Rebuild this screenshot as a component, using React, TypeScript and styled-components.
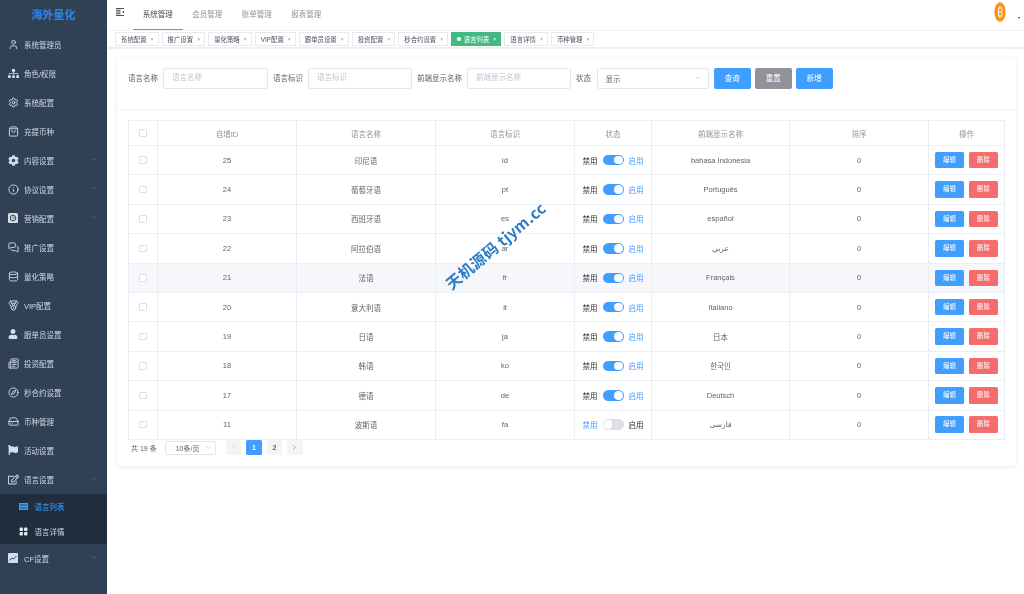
import React from "react";
import styled, { createGlobalStyle } from "styled-components";
import {
  User, Settings, ShoppingBag, Info, MessagesSquare, Database, Medal,
  Newspaper, Compass, ChevronDown, ChevronUp, ChevronLeft, ChevronRight, HardDrive,
} from "lucide-react";
import { FaSitemap, FaCog, FaUser, FaFlag, FaRegEdit } from "react-icons/fa";
import { BsGridFill } from "react-icons/bs";

const GlobalStyle = createGlobalStyle`
  html, body {
    margin: 0;
    padding: 0;
    background: #fff;
    overflow: hidden;
    font-family: "Liberation Sans", "Noto Sans CJK SC", "DejaVu Sans", sans-serif;
  }
  * { box-sizing: border-box; }
`;

// small filled icons the packages don't have
const ClockBox = () => (
  <svg width="10" height="10" viewBox="0 0 10 10">
    <rect width="10" height="10" rx="1.5" fill="#d5dde7" />
    <circle cx="5" cy="5" r="2.8" fill="none" stroke="#304156" strokeWidth="1" />
    <path d="M5 3.5V5h1.5" fill="none" stroke="#304156" strokeWidth=".8" />
  </svg>
);

const ChartBox = () => (
  <svg width="10" height="10" viewBox="0 0 10 10">
    <rect width="10" height="10" rx="1" fill="#d5dde7" />
    <path d="M1.5 7.5 4 5l1.5 1L8.5 3" fill="none" stroke="#304156" strokeWidth="1" />
  </svg>
);

const ListBox = () => (
  <svg width="9" height="7" viewBox="0 0 9 7">
    <rect width="9" height="7" fill="#409eff" />
    <path d="M1 2h7M1 5h7" stroke="#1f2d3d" strokeWidth=".8" />
  </svg>
);

const menu = [
  { label: "系统管理员", icon: <User size={11} /> },
  { label: "角色/权限", icon: <FaSitemap size={11} /> },
  { label: "系统配置", icon: <Settings size={11} /> },
  { label: "充提币种", icon: <ShoppingBag size={11} /> },
  { label: "内容设置", icon: <FaCog size={11} />, arrow: true },
  { label: "协议设置", icon: <Info size={11} />, arrow: true },
  { label: "营销配置", icon: <ClockBox />, arrow: true },
  { label: "推广设置", icon: <MessagesSquare size={11} /> },
  { label: "量化策略", icon: <Database size={11} /> },
  { label: "VIP配置", icon: <Medal size={11} /> },
  { label: "跟单员设置", icon: <FaUser size={10} /> },
  { label: "投资配置", icon: <Newspaper size={11} /> },
  { label: "秒合约设置", icon: <Compass size={11} /> },
  { label: "币种管理", icon: <HardDrive size={11} /> },
  { label: "活动设置", icon: <FaFlag size={10} /> },
];

const tags = ["系统配置", "推广设置", "量化策略", "VIP配置", "跟单员设置", "投资配置", "秒合约设置", "语言列表", "语言详情", "币种管理"];

const rows = [
  { id: 25, name: "印尼语", code: "id", show: "bahasa Indonesia", on: true },
  { id: 24, name: "葡萄牙语", code: "pt", show: "Português", on: true },
  { id: 23, name: "西班牙语", code: "es", show: "español", on: true },
  { id: 22, name: "阿拉伯语", code: "ar", show: "عربي", on: true },
  { id: 21, name: "法语", code: "fr", show: "Français", on: true, hover: true },
  { id: 20, name: "意大利语", code: "it", show: "Italiano", on: true },
  { id: 19, name: "日语", code: "ja", show: "日本", on: true },
  { id: 18, name: "韩语", code: "ko", show: "한국인", on: true },
  { id: 17, name: "德语", code: "de", show: "Deutsch", on: true },
  { id: 11, name: "波斯语", code: "fa", show: "فارسی", on: false },
];

export default function App() {
  return (
    <Page>
      <GlobalStyle />
      <Sidebar>
        <Logo>海外量化</Logo>
        {menu.map((m) => (
          <MenuItem key={m.label}>
            <MenuIcon>{m.icon}</MenuIcon>
            {m.label}
            {m.arrow && <Arrow><ChevronDown size={7} /></Arrow>}
          </MenuItem>
        ))}
        <MenuItem>
          <MenuIcon><FaRegEdit size={11} /></MenuIcon>
          语言设置
          <Arrow><ChevronUp size={7} /></Arrow>
        </MenuItem>
        <SubMenu>
          <SubItem $active>
            <MenuIcon><ListBox /></MenuIcon>
            语言列表
          </SubItem>
          <SubItem>
            <MenuIcon><BsGridFill size={9} /></MenuIcon>
            语言详情
          </SubItem>
        </SubMenu>
        <MenuItem>
          <MenuIcon><ChartBox /></MenuIcon>
          CF设置
          <Arrow><ChevronDown size={7} /></Arrow>
        </MenuItem>
      </Sidebar>

      <Main>
        <TopNav>
          <Hamburger viewBox="0 0 10 9" width="9" height="8">
            <path d="M0 .5h9M0 2.5h5M0 4.5h5M0 6.5h5M0 8.5h9" stroke="#333" strokeWidth="1" fill="none" />
            <path d="M9 3 7 4.5 9 6z" fill="#333" />
          </Hamburger>
          <NavTab $active>系统管理</NavTab>
          <NavTab>会员管理</NavTab>
          <NavTab>账单管理</NavTab>
          <NavTab>报表管理</NavTab>
          <UserBox>
            <svg width="12" height="20" viewBox="0 0 12 20">
              <ellipse cx="6" cy="10" rx="5.6" ry="9.8" fill="#f7931a" />
              <path d="M4.6 6h2.2c1.6 0 1.6 3.6 0 3.8H4.6M6.8 9.8c1.9.2 1.9 4.2 0 4.2H4.6V6M5.4 4.6V6M7 4.6V6M5.4 14v1.4M7 14v1.4" stroke="#fff" strokeWidth="1" fill="none" />
            </svg>
            <Caret />
          </UserBox>
        </TopNav>

        <TagBar>
          {tags.map((t) => {
            const active = t === "语言列表";
            return (
              <Tag key={t} $active={active}>
                {active && <TagDot />}
                {t}
                <TagClose $active={active}>×</TagClose>
              </Tag>
            );
          })}
        </TagBar>

        <Content>
          <Card>
            <SearchBar>
              <Label>语言名称</Label>
              <Input $w={105}>语言名称</Input>
              <Label>语言标识</Label>
              <Input $w={104}>语言标识</Input>
              <Label>前端显示名称</Label>
              <Input $w={104}>前端显示名称</Input>
              <Label>状态</Label>
              <Select>
                显示
                <ChevronDown size={8} color="#c0c4cc" />
              </Select>
              <Button $color="#409eff">查询</Button>
              <Button $color="#909399">重置</Button>
              <Button $color="#409eff">新增</Button>
            </SearchBar>

            <TableWrap>
              <Table>
                <HeadRow>
                  <Cell><CheckBox /></Cell>
                  <Cell>自增ID</Cell>
                  <Cell>语言名称</Cell>
                  <Cell>语言标识</Cell>
                  <Cell>状态</Cell>
                  <Cell>前端显示名称</Cell>
                  <Cell>排序</Cell>
                  <Cell>操作</Cell>
                </HeadRow>
                {rows.map((r) => (
                  <Row key={r.id} $hover={r.hover}>
                    <Cell><CheckBox /></Cell>
                    <Cell>{r.id}</Cell>
                    <Cell>{r.name}</Cell>
                    <Cell>{r.code}</Cell>
                    <Cell>
                      <SwitchLabel $active={!r.on}>禁用</SwitchLabel>
                      <Switch $on={r.on} />
                      <SwitchLabel $active={r.on}>启用</SwitchLabel>
                    </Cell>
                    <Cell>{r.show}</Cell>
                    <Cell>0</Cell>
                    <Cell>
                      <SmallButton $color="#409eff">编辑</SmallButton>
                      <SmallButton $color="#f56c6c">删除</SmallButton>
                    </Cell>
                  </Row>
                ))}
              </Table>

              <Pagination>
                <Total>共 19 条</Total>
                <PageSize>
                  10条/页
                  <ChevronDown size={7} color="#c0c4cc" />
                </PageSize>
                <Pager><ChevronLeft size={7} color="#c0c4cc" /></Pager>
                <Pager $active>1</Pager>
                <Pager>2</Pager>
                <Pager><ChevronRight size={7} color="#606266" /></Pager>
              </Pagination>
            </TableWrap>
          </Card>
        </Content>
      </Main>

      <Watermark>天机源码 tjym.cc</Watermark>
    </Page>
  );
}

const Page = styled.div`
  display: flex;
  width: 1024px;
  height: 594px;
  overflow: hidden;
  opacity: 0.999;
`;

const Sidebar = styled.aside`
  width: 107px;
  flex-shrink: 0;
  background: #304156;
  color: #bfcbd9;
`;

const Logo = styled.div`
  height: 29.5px;
  line-height: 30px;
  text-align: center;
  font-size: 11px;
  font-weight: 700;
  color: #2a86e8;
`;

const MenuItem = styled.div`
  position: relative;
  display: flex;
  align-items: center;
  height: 29px;
  padding-left: 7.5px;
  font-size: 7.5px;
  color: #d0d8e2;
`;

const MenuIcon = styled.span`
  display: flex;
  align-items: center;
  justify-content: center;
  width: 11px;
  margin-right: 5.5px;
  color: #d5dde7;
`;

const Arrow = styled.span`
  position: absolute;
  right: 10px;
  top: 10px;
  color: #6f7f93;
`;

const SubMenu = styled.div`
  background: #1f2d3d;
  height: 50px;
`;

const SubItem = styled.div<{ $active?: boolean }>`
  display: flex;
  align-items: center;
  height: 25px;
  padding-left: 18px;
  font-size: 7.5px;
  color: ${(p) => (p.$active ? "#409eff" : "#d0d8e2")};

  ${MenuIcon} {
    color: #e4e8ee;
  }
`;

const Main = styled.main`
  flex: 1;
  display: flex;
  flex-direction: column;
  min-width: 0;
`;

const TopNav = styled.header`
  display: flex;
  align-items: stretch;
  height: 30.5px;
  padding-left: 9px;
  border-bottom: 1px solid #f2f3f8;
`;

const Hamburger = styled.svg`
  margin-top: 8px;
  margin-right: 8px;
`;

const NavTab = styled.div<{ $active?: boolean }>`
  width: 49.5px;
  text-align: center;
  font-size: 7.5px;
  line-height: 30px;
  color: ${(p) => (p.$active ? "#4a4f57" : "#909399")};
  border-bottom: ${(p) => (p.$active ? "1px solid #409eff" : "none")};
`;

const UserBox = styled.div`
  margin-left: auto;
  display: flex;
  align-items: flex-start;
  padding: 2px 4px 0 0;
`;

const Caret = styled.span`
  margin: 15px 0 0 12px;
  border-left: 1.5px solid transparent;
  border-right: 1.5px solid transparent;
  border-top: 2px solid #444;
`;

const TagBar = styled.div`
  display: flex;
  align-items: flex-start;
  gap: 3px;
  height: 18.5px;
  padding: 1.5px 0 0 8px;
  border-bottom: 2px solid #eee;
`;

const Tag = styled.div<{ $active?: boolean }>`
  display: flex;
  align-items: center;
  height: 14px;
  padding: 0 2.5px 0 5px;
  font-size: 6.4px;
  color: ${(p) => (p.$active ? "#fff" : "#495060")};
  background: ${(p) => (p.$active ? "#42b983" : "#fff")};
  border: 1px solid ${(p) => (p.$active ? "#42b983" : "#e8eaf0")};
`;

const TagDot = styled.i`
  width: 3.5px;
  height: 3.5px;
  margin-right: 3px;
  border-radius: 50%;
  background: #fff;
`;

const TagClose = styled.span<{ $active?: boolean }>`
  width: 6px;
  margin-left: 2.5px;
  text-align: center;
  font-size: 5px;
  color: ${(p) => (p.$active ? "#fff" : "#909399")};
`;

const Content = styled.div`
  flex: 1;
  padding: 9px 8px 0 10px;
`;

const Card = styled.section`
  height: 408px;
  background: #fff;
  border-radius: 3px;
  box-shadow: 0 1px 5px rgba(40, 60, 120, 0.1);
`;

const SearchBar = styled.div`
  display: flex;
  align-items: flex-start;
  height: 52px;
  padding: 10px 0 0 11px;
  border-bottom: 1px solid #f0f1f5;
`;

const Label = styled.span`
  margin-right: 5px;
  font-size: 7.5px;
  line-height: 21px;
  color: #606266;
`;

const Input = styled.div<{ $w: number }>`
  width: ${(p) => p.$w}px;
  height: 20.5px;
  margin-right: 5px;
  padding-left: 8px;
  font-size: 7.5px;
  line-height: 18px;
  color: #c0c4cc;
  border: 1px solid #e4e7ed;
  border-radius: 2px;
`;

const Select = styled.div`
  display: flex;
  align-items: center;
  justify-content: space-between;
  width: 112.5px;
  height: 20.5px;
  margin: 0 5px 0 0.5px;
  padding: 0 6px 0 8px;
  font-size: 7.5px;
  color: #606266;
  border: 1px solid #e4e7ed;
  border-radius: 2px;
`;

const Button = styled.div<{ $color: string }>`
  width: 36.5px;
  height: 21px;
  margin-right: 4.5px;
  text-align: center;
  font-size: 7.5px;
  line-height: 21px;
  color: #fff;
  background: ${(p) => p.$color};
  border-radius: 2px;
`;

const TableWrap = styled.div`
  padding: 10px 11px 0;
`;

const Table = styled.div`
  border-top: 1px solid #ebeef5;
  border-left: 1px solid #ebeef5;
`;

const Row = styled.div<{ $hover?: boolean }>`
  display: grid;
  grid-template-columns: 29px 139px 139px 139px 77px 138px 139px 76px;
  height: 29.4px;
  font-size: 7.5px;
  color: #606266;
  background: ${(p) => (p.$hover ? "#f5f7fa" : "#fff")};
`;

const HeadRow = styled(Row)`
  height: 25px;
  color: #909399;
`;

const Cell = styled.div`
  display: flex;
  align-items: center;
  justify-content: center;
  gap: 5px;
  border-right: 1px solid #ebeef5;
  border-bottom: 1px solid #ebeef5;
  white-space: nowrap;
`;

const CheckBox = styled.span`
  width: 7.5px;
  height: 7.5px;
  background: #fff;
  border: 1px solid #dcdfe6;
  border-radius: 1px;
`;

const SwitchLabel = styled.span<{ $active?: boolean }>`
  color: ${(p) => (p.$active ? "#409eff" : "#303133")};
`;

const Switch = styled.span<{ $on?: boolean }>`
  display: flex;
  justify-content: ${(p) => (p.$on ? "flex-end" : "flex-start")};
  align-items: center;
  width: 21px;
  height: 10.5px;
  padding: 1px;
  border-radius: 6px;
  background: ${(p) => (p.$on ? "#409eff" : "#dcdfe6")};

  &::after {
    content: "";
    width: 8.5px;
    height: 8.5px;
    border-radius: 50%;
    background: #fff;
  }
`;

const SmallButton = styled.div<{ $color: string }>`
  width: 29px;
  height: 16.5px;
  text-align: center;
  font-size: 6.4px;
  line-height: 16.5px;
  color: #fff;
  background: ${(p) => p.$color};
  border-radius: 1.5px;
`;

const Pagination = styled.div`
  display: flex;
  align-items: center;
  height: 15px;
  margin-top: 0.5px;
  padding-left: 3px;
  font-size: 7px;
  color: #606266;
`;

const Total = styled.span`
  margin-right: 8px;
`;

const PageSize = styled.div`
  display: flex;
  align-items: center;
  justify-content: space-between;
  width: 51px;
  height: 14px;
  margin-right: 10px;
  padding: 0 3px 0 10px;
  border: 1px solid #e4e7ed;
  border-radius: 2px;
`;

const Pager = styled.div<{ $active?: boolean }>`
  display: flex;
  align-items: center;
  justify-content: center;
  width: 15.5px;
  height: 15px;
  margin-right: 5px;
  font-weight: 700;
  border-radius: 1.5px;
  color: ${(p) => (p.$active ? "#fff" : "#606266")};
  background: ${(p) => (p.$active ? "#409eff" : "#f4f4f5")};
`;

const Watermark = styled.div`
  position: absolute;
  left: 495px;
  top: 245px;
  transform: translate(-50%, -50%) rotate(-40deg);
  font-family: "Noto Sans CJK SC", "Noto Sans", sans-serif;
  font-size: 15.5px;
  font-weight: 700;
  letter-spacing: 0.3px;
  white-space: nowrap;
  color: #2b7cc6;
`;
